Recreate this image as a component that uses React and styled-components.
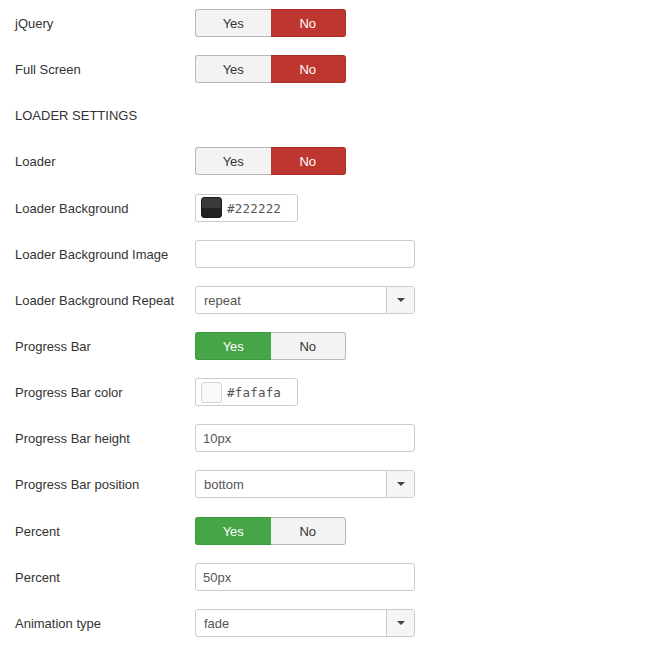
import React from 'react';
import styled, { createGlobalStyle } from 'styled-components';

const GlobalStyle = createGlobalStyle`
  body {
    margin: 0;
    background: #fff;
    font-family: "Liberation Sans", Arial, sans-serif;
    font-size: 13px;
    color: #333;
  }
`

const Form = styled.div`
  padding: 0 0 0 15px;
  width: 634px;
`

const Row = styled.div`
  display: flex;
  align-items: center;
  height: 46.15px;
`

const Label = styled.div`
  width: 180px;
  flex-shrink: 0;
  line-height: 18px;
  padding-top: 2px;
`

const Heading = styled.div`
  text-transform: uppercase;
  line-height: 18px;
  padding-top: 2px;
`

const Toggle = styled.div`
  display: flex;
  width: 151px;
  height: 28px;
`

const Option = styled.div`
  flex: 1;
  display: flex;
  align-items: center;
  justify-content: center;
  box-sizing: border-box;
  padding-top: 1px;
  border: 1px solid ${p => p.active ? (p.tone === 'green' ? '#3e9a3e' : '#a9302a') : '#b8b8b8'};
  background: ${p => p.active ? (p.tone === 'green' ? '#46a546' : '#bd362f') : '#f3f3f3'};
  color: ${p => p.active ? '#fff' : '#333'};
  font-size: 13px;

  &:first-child {
    border-radius: 3px 0 0 3px;
    border-right: none;
  }
  &:last-child {
    border-radius: 0 3px 3px 0;
    border-left: none;
  }
`

const ColorBox = styled.div`
  display: flex;
  align-items: center;
  gap: 5px;
  box-sizing: border-box;
  width: 103px;
  height: 28px;
  padding: 0 5px;
  border: 1px solid #ccc;
  border-radius: 3px;
  background: #fff;
`

const Swatch = styled.div`
  width: 21px;
  height: 21px;
  border-radius: 3px;
  box-sizing: border-box;
  border: 1px solid ${p => p.light ? '#d4d4d4' : '#1a1a1a'};
  background: ${p => p.light
    ? '#fafafa'
    : 'linear-gradient(to bottom, #3a3a3a 0, #3a3a3a 50%, #222 50%, #222 100%)'};
`

const ColorText = styled.span`
  font-family: "DejaVu Sans Mono", "Liberation Mono", monospace;
  font-size: 12.5px;
  color: #555;
  letter-spacing: 0.2px;
  padding-top: 1px;
`

const TextInput = styled.div`
  box-sizing: border-box;
  width: 220px;
  height: 28px;
  padding: 1px 7px 0;
  display: flex;
  align-items: center;
  border: 1px solid #ccc;
  border-radius: 3px;
  background: #fff;
  color: #555;
`

const Select = styled.div`
  box-sizing: border-box;
  width: 220px;
  height: 28px;
  display: flex;
  border: 1px solid #ccc;
  border-radius: 3px;
  background: #fff;
  color: #555;
`

const SelectValue = styled.div`
  flex: 1;
  display: flex;
  align-items: center;
  padding: 1px 0 0 8px;
`

const Arrow = styled.div`
  width: 27px;
  display: flex;
  align-items: center;
  justify-content: center;
  border-left: 1px solid #ccc;
  background: #f5f5f5;
  border-radius: 0 3px 3px 0;

  &::after {
    content: '';
    border-left: 4px solid transparent;
    border-right: 4px solid transparent;
    border-top: 4px solid #444;
  }
`

const YesNo = ({ value, tone }) => (
  <Toggle>
    <Option active={value === 'yes'} tone={tone}>Yes</Option>
    <Option active={value === 'no'} tone={tone}>No</Option>
  </Toggle>
)

const Field = ({ label, children }) => (
  <Row>
    <Label>{label}</Label>
    {children}
  </Row>
)

export default function App() {
  return (
    <>
      <GlobalStyle />
      <Form>
        <Field label="jQuery"><YesNo value="no" tone="red" /></Field>
        <Field label="Full Screen"><YesNo value="no" tone="red" /></Field>
        <Row><Heading>Loader Settings</Heading></Row>
        <Field label="Loader"><YesNo value="no" tone="red" /></Field>
        <Field label="Loader Background">
          <ColorBox><Swatch /><ColorText>#222222</ColorText></ColorBox>
        </Field>
        <Field label="Loader Background Image"><TextInput /></Field>
        <Field label="Loader Background Repeat">
          <Select><SelectValue>repeat</SelectValue><Arrow /></Select>
        </Field>
        <Field label="Progress Bar"><YesNo value="yes" tone="green" /></Field>
        <Field label="Progress Bar color">
          <ColorBox><Swatch light /><ColorText>#fafafa</ColorText></ColorBox>
        </Field>
        <Field label="Progress Bar height"><TextInput>10px</TextInput></Field>
        <Field label="Progress Bar position">
          <Select><SelectValue>bottom</SelectValue><Arrow /></Select>
        </Field>
        <Field label="Percent"><YesNo value="yes" tone="green" /></Field>
        <Field label="Percent"><TextInput>50px</TextInput></Field>
        <Field label="Animation type">
          <Select><SelectValue>fade</SelectValue><Arrow /></Select>
        </Field>
      </Form>
    </>
  )
}
